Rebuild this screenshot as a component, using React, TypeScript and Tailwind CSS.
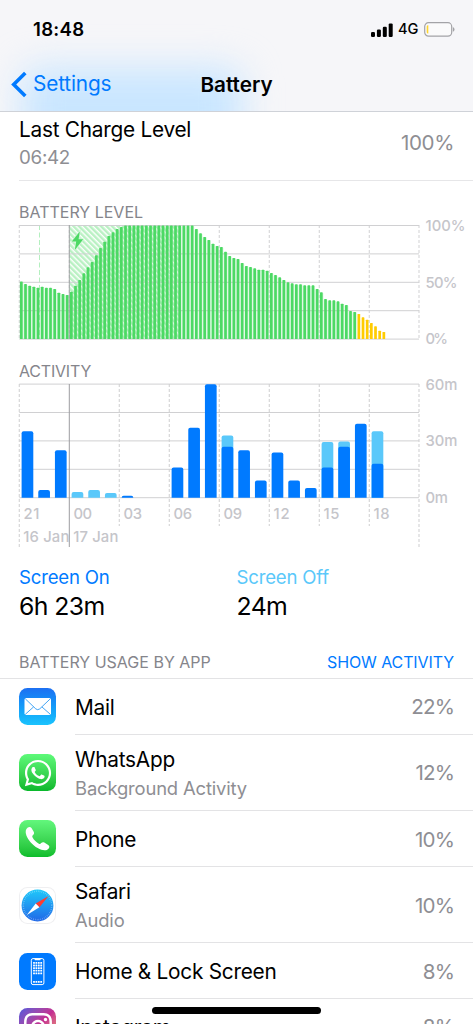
import type { ReactNode } from 'react'
import { FaInstagram, FaWhatsapp } from 'react-icons/fa'

// Bar heights in px, one per quarter of an hour
const levels = [
  57.5, 55, 53.3, 52.3, 51.3, 52.3, 51.3, 51.3, 50, 46.3, 45, 44,
  47.3, 53.3, 59, 65.7, 71.7, 77, 83.7, 91, 97.3, 103, 106.7, 110,
  112, 113.5, 113.5, 113.5, 113.5, 113.5, 113.5, 113.5, 113.5, 113.5, 113.5, 113.5,
  113.5, 113.5, 113.5, 113.5, 113.5, 113.5, 110, 105.7, 102, 99, 95.3, 93,
  92, 87.3, 83, 81, 80, 76, 73, 72, 70.7, 69.3, 69.3, 68.3,
  66, 64, 61.7, 59, 56.7, 55.7, 54.7, 54.7, 53.7, 53.7, 53.7, 50,
  46.7, 40, 38.7, 38.7, 37.7, 35.3, 34, 28, 27, 25, 21.7, 19.3,
  16, 12.7, 8.3, 7,
]

// [hour slot, screen on height, total height]
const activity: [number, number, number][] = [
  [0, 66.5, 66.5],
  [1, 7.7, 7.7],
  [2, 47.5, 47.5],
  [3, 0, 5.6],
  [4, 0, 7.6],
  [5, 0, 4.8],
  [6, 2, 2],
  [9, 30.2, 30.2],
  [10, 70, 70],
  [11, 113.5, 113.5],
  [12, 51, 62.3],
  [13, 47.5, 47.5],
  [14, 17.2, 17.2],
  [15, 45.3, 45.3],
  [16, 17.2, 17.2],
  [17, 9.6, 9.6],
  [18, 30.2, 55.6],
  [19, 51, 56.3],
  [20, 74, 74],
  [21, 34, 66.5],
]

const hours = ['21', '00', '03', '06', '09', '12', '15', '18']
const LEFT = 19.3
const RIGHT = 419

function barPath(x: number, bottom: number, w: number, h: number) {
  const r = Math.min(2, h)
  return `M${x} ${bottom}v${-(h - r)}q0 ${-r} ${r} ${-r}h${w - 2 * r}q${r} 0 ${r} ${r}v${h - r}z`
}

function GridRows({ top }: { top: number }) {
  return (
    <>
      {[0, 1, 2, 3, 4].map((i) => (
        <line key={i} x1={LEFT} x2={RIGHT} y1={top + i * 28.4} y2={top + i * 28.4} stroke="#d0d0d2" strokeWidth="1" />
      ))}
    </>
  )
}

function LevelChart() {
  const bottom = 339
  return (
    <svg
      width="473"
      height="135"
      viewBox="0 213 473 135"
      className="-mt-[10px] block overflow-visible"
      fontFamily="Inter, sans-serif"
    >
      <defs>
        <pattern id="hatch" width="3.9" height="3.9" patternUnits="userSpaceOnUse" patternTransform="rotate(-45)">
          <rect width="2.5" height="3.9" fill="#b9f1c3" />
        </pattern>
      </defs>
      {hours.map((h, i) => (
        <line
          key={h}
          x1={LEFT + i * 50}
          x2={LEFT + i * 50}
          y1="225"
          y2={bottom}
          stroke="#d9d9db"
          strokeWidth="1.2"
          strokeDasharray="3 2"
        />
      ))}
      <line x1="39.5" x2="39.5" y1="225" y2={bottom} stroke="#b4efbf" strokeDasharray="5 2.5" />
      <line x1={RIGHT} x2={RIGHT} y1="225" y2={bottom} stroke="#d9d9db" strokeWidth="1.2" strokeDasharray="3 2" />
      <rect x="69.5" y="225.5" width="111.5" height="113.5" fill="url(#hatch)" />
      <GridRows top={225.5} />
      {levels.map((h, i) => (
        <g key={i}>
          {i < 81 && (
            <rect x={LEFT + i * 4.1667} y={bottom - h + 0.8} width="4.17" height={h - 0.8} fill="#4cd964" opacity="0.16" />
          )}
          <rect
            x={LEFT + 0.7 + i * 4.1667}
            y={bottom - h}
            width="2.7"
            height={h}
            rx="0.6"
            fill={i < 81 ? '#4cd964' : '#ffcc00'}
          />
        </g>
      ))}
      <line x1="69.3" x2="69.3" y1="225" y2={bottom} stroke="#8e8e93" strokeWidth="1" opacity="0.75" />
      <path
        d="M79.8 231.5L71.8 241.6H76.2L74.8 250L83.2 239.3H78.6Z"
        fill="#4cd964"
        stroke="#d3f6d9"
        strokeWidth="1.6"
        paintOrder="stroke"
      />
      <g fill="#c5c5ca" fontSize="14.8" fontWeight="500">
        <text x="425.5" y="231" textLength="40">100%</text>
        <text x="425.5" y="287.5" textLength="32">50%</text>
        <text x="425.5" y="344.3" textLength="22.5">0%</text>
      </g>
    </svg>
  )
}

function ActivityChart() {
  const bottom = 497.7
  return (
    <svg
      width="473"
      height="180"
      viewBox="0 371 473 180"
      className="-mt-[10px] block overflow-visible"
      fontFamily="Inter, sans-serif"
    >
      {hours.map((h, i) =>
        i === 1 ? null : (
          <line
            key={h}
            x1={LEFT + i * 50}
            x2={LEFT + i * 50}
            y1="384"
            y2={i === 0 ? 547 : 526}
            stroke="#d6d6d8"
            strokeWidth="1.2"
            strokeDasharray="3 2"
          />
        ),
      )}
      <line x1={RIGHT} x2={RIGHT} y1="384" y2="547" stroke="#d6d6d8" strokeWidth="1.2" strokeDasharray="3 2" />
      <GridRows top={384.1} />
      {activity.map(([slot, on, total]) => {
        const x = LEFT + 2.3 + slot * 16.667
        return (
          <g key={slot}>
            {total > on && <path d={barPath(x, bottom, 11.7, total)} fill="#5ac8fa" />}
            {on > 0 && <path d={barPath(x, bottom, 11.7, on)} fill="#007aff" />}
          </g>
        )
      })}
      <g fill="#c5c5ca" fontSize="14.8" fontWeight="500">
        {hours.map((h, i) => (
          <text key={h} x={LEFT + 4.2 + i * 50} y="518.6" textLength={/[12]/.test(h) ? 16 : 18.5}>
            {h}
          </text>
        ))}
        <text x="23.3" y="541.8" textLength="46">16 Jan</text>
        <text x="73.3" y="541.8" textLength="45">17 Jan</text>
        <text x="425.5" y="389.6" textLength="32">60m</text>
        <text x="425.5" y="446.3" textLength="32">30m</text>
        <text x="425.5" y="503" textLength="22.5">0m</text>
      </g>
      <line x1="69.3" x2="69.3" y1="384" y2="547" stroke="#9d9da0" strokeWidth="1" />
    </svg>
  )
}

function StatusBar() {
  return (
    <div className="flex h-[56px] items-center justify-between pt-1 pr-[18px] pl-[33px]">
      <span className="text-[18.6px] font-semibold tracking-[0.3px]">18:48</span>
      <div className="flex items-center">
        <svg width="22" height="14" viewBox="0 0 22 14">
          <rect x="0" y="9" width="4" height="5" rx="1.2" />
          <rect x="5.9" y="6.6" width="4" height="7.4" rx="1.2" />
          <rect x="11.8" y="3.7" width="4" height="10.3" rx="1.2" />
          <rect x="17.7" y="0.4" width="4" height="13.6" rx="1.2" />
        </svg>
        <span className="ml-[5.5px] text-[14.6px] font-medium">4G</span>
        <svg width="31" height="15" viewBox="0 0 31 15" className="ml-[5.5px]">
          <rect x="0.7" y="0.7" width="27" height="13.4" rx="3.8" fill="#fafafb" stroke="#a3a3a7" strokeWidth="1.2" />
          <path d="M4.3 3.2v8.4h-.6q-1-.3-1-1.6V4.8q0-1.3 1-1.6z" fill="#ffd52e" />
          <path d="M28.9 5v4.8q1.600-.8 1.600-2.400t-1.600-2.400z" fill="#a3a3a7" />
        </svg>
      </div>
    </div>
  )
}

function MailIcon() {
  return (
    <svg width="37" height="37" viewBox="0 0 37 37">
      <rect x="5.5" y="10" width="26.5" height="17" rx="1.8" fill="#fff" />
      <path
        d="M6.3 10.8L16.8 20.9Q18.7 22.5 20.7 20.9L31.3 10.8M6.3 26.3L14.6 18.9M31.3 26.3L22.9 18.9"
        fill="none"
        stroke="#2f9bf3"
        strokeWidth="0.9"
      />
    </svg>
  )
}

function PhoneIcon() {
  return (
    <svg width="37" height="37" viewBox="0 0 37 37">
      <path
        d="M8.8 7.5C10.2 6.5 11.700 6.700 12.500 8.100L14.700 11.800C15.400 13.100 15.100 14.200 14.100 15.100C13.200 15.900 13.100 16.500 13.600 17.400C15 20 17.400 22.300 19.900 23.700C20.800 24.200 21.400 24 22.200 23.100C23.100 22.200 24.100 21.900 25.300 22.600L29.200 25C30.500 25.800 30.700 27.200 29.700 28.500C27.600 31.200 23.300 30.800 18.700 28.100C13.600 25.100 9.200 20.300 7.400 15.500C6.200 12.100 6.400 9.200 8.800 7.500Z"
        fill="#fff"
      />
    </svg>
  )
}

function SafariIcon() {
  return (
    <svg width="37" height="37" viewBox="0 0 37 37">
      <defs>
        <linearGradient id="dial" x1="0" y1="0" x2="0" y2="1">
          <stop offset="0" stopColor="#1fc8fa" />
          <stop offset="1" stopColor="#2068e8" />
        </linearGradient>
      </defs>
      <circle cx="18.5" cy="18.5" r="15.9" fill="url(#dial)" />
      <circle
        cx="18.5"
        cy="18.5"
        r="14.2"
        fill="none"
        stroke="#fff"
        strokeWidth="1.5"
        strokeDasharray="0.5 1.36"
        opacity="0.5"
      />
      <path d="M29.6 8.9L16.7 16.6L20.4 20.3Z" fill="#ff3b30" />
      <path d="M16.7 16.6L20.4 20.3L7.8 28Z" fill="#fff" />
    </svg>
  )
}

function HomeScreenIcon() {
  const cols = [14.1, 16.5, 18.9, 21.3]
  return (
    <svg width="37" height="37" viewBox="0 0 37 37">
      <rect x="12.3" y="5.6" width="12.6" height="26" rx="1.7" fill="none" stroke="#fff" strokeWidth="1" />
      <path d="M15.3 5.5h6.6l-.6 1.7h-5.4z" fill="#fff" />
      {[9, 11.6, 14.2, 16.8, 19.4, 27.9].map((y) =>
        cols.map((x) => <rect key={`${x}-${y}`} x={x} y={y} width="1.8" height="1.8" rx="0.3" fill="#fff" />),
      )}
    </svg>
  )
}

type AppUsage = {
  name: string
  note?: string
  percent: string
  tile: string
  icon: ReactNode
}

const apps: AppUsage[] = [
  { name: 'Mail', percent: '22%', tile: 'bg-linear-to-b from-[#1d6ff2] to-[#1bc3fd]', icon: <MailIcon /> },
  {
    name: 'WhatsApp',
    note: 'Background Activity',
    percent: '12%',
    tile: 'bg-linear-to-b from-[#5dfa79] to-[#08b82b]',
    icon: <FaWhatsapp className="size-[30px] text-white" />,
  },
  { name: 'Phone', percent: '10%', tile: 'bg-linear-to-b from-[#62f77c] to-[#0bbd2b]', icon: <PhoneIcon /> },
  {
    name: 'Safari',
    note: 'Audio',
    percent: '10%',
    tile: 'bg-white ring-1 ring-[#efeff1] ring-inset',
    icon: <SafariIcon />,
  },
  { name: 'Home & Lock Screen', percent: '8%', tile: 'bg-[#007aff]', icon: <HomeScreenIcon /> },
  {
    name: 'Instagram',
    percent: '8%',
    tile: 'bg-linear-to-br from-[#4f55dd] via-[#c42d91] to-[#fdb04b]',
    icon: <FaInstagram className="size-[32px] text-white" />,
  },
]

function AppRow({ app }: { app: AppUsage }) {
  return (
    <div className={`flex shrink-0 items-stretch pl-[19px] ${app.note ? 'h-[76.6px]' : 'h-[55.6px]'}`}>
      <div className="flex w-[56px] shrink-0 items-center">
        <div className={`flex size-[37px] items-center justify-center overflow-hidden rounded-[8.5px] ${app.tile}`}>
          {app.icon}
        </div>
      </div>
      <div className="flex flex-1 items-center justify-between border-b border-[#e3e3e5] pt-[3px] pr-[19px]">
        <div className="leading-7">
          <div className="text-[20.8px] tracking-[-0.25px]">{app.name}</div>
          {app.note && <div className="text-[18.4px] tracking-[-0.15px] text-[#8e8e93]">{app.note}</div>}
        </div>
        <span className="text-[20.6px] tracking-[-0.9px] text-[#8e8e93]">{app.percent}</span>
      </div>
    </div>
  )
}

export default function App() {
  return (
    <div className="relative flex h-[1024px] w-[473px] flex-col overflow-hidden bg-white font-['Inter',sans-serif] text-black">
      <header className="relative isolate h-[112px] shrink-0 overflow-hidden border-b border-[#cfd2d8] bg-[#f6f6f9]">
        <div className="absolute top-[68px] left-[22px] -z-10 h-[80px] w-[220px] rounded-2xl bg-[#c9e6ff] blur-[18px]" />
        <StatusBar />
        <div className="grid h-[56px] grid-cols-3 items-center pl-[11px]">
          <div className="flex items-center text-[#007aff]">
            <svg width="17" height="27" viewBox="0 0 17 27">
              <path d="M14.3 2L2.7 13.5L14.3 25" fill="none" stroke="currentColor" strokeWidth="3.6" />
            </svg>
            <span className="ml-[5px] text-[20.8px] tracking-[-0.15px]">Settings</span>
          </div>
          <h1 className="-ml-[11px] pt-px text-center text-[20.7px] font-semibold">Battery</h1>
        </div>
      </header>

      <div className="ml-[19px] flex h-[69px] shrink-0 items-center justify-between border-b border-[#e6e6e8] pr-[19px] pb-[5px]">
        <div className="leading-7">
          <div className="text-[20.8px] tracking-[-0.25px]">Last Charge Level</div>
          <div className="text-[18.8px] tracking-[-0.3px] text-[#8e8e93]">06:42</div>
        </div>
        <span className="text-[20.6px] tracking-[-0.4px] text-[#8e8e93]">100%</span>
      </div>

      <section className="mt-[21px] shrink-0">
        <h2 className="mb-px pl-[19px] text-[16px] leading-5 text-[#85858b]">BATTERY LEVEL</h2>
        <LevelChart />
      </section>

      <section className="mt-[13px] shrink-0">
        <h2 className="pl-[19px] text-[16px] leading-5 tracking-[-0.2px] text-[#85858b]">ACTIVITY</h2>
        <ActivityChart />
      </section>

      <div className="mt-[12px] flex shrink-0 pl-[19px] leading-7">
        <div className="w-[217.5px]">
          <div className="text-[18.6px] tracking-[-0.2px] text-[#007aff]">Screen On</div>
          <div className="mt-px text-[24.8px] tracking-[-0.6px]">6h 23m</div>
        </div>
        <div>
          <div className="text-[18.6px] tracking-[-0.2px] text-[#5ac8fa]">Screen Off</div>
          <div className="mt-px text-[24.8px] tracking-[-0.6px]">24m</div>
        </div>
      </div>

      <div className="flex h-[59px] shrink-0 items-end justify-between border-b border-[#e3e3e5] px-[19px] pb-[6px] text-[16px] leading-5">
        <h2 className="text-[#85858b]">BATTERY USAGE BY APP</h2>
        <span className="tracking-[-0.1px] text-[#007aff]">SHOW ACTIVITY</span>
      </div>

      {apps.map((app) => (
        <AppRow key={app.name} app={app} />
      ))}

      {/* Home indicator */}
      <div className="absolute bottom-[10.5px] left-[152px] h-[6.3px] w-[169px] rounded-full bg-black" />
    </div>
  )
}
